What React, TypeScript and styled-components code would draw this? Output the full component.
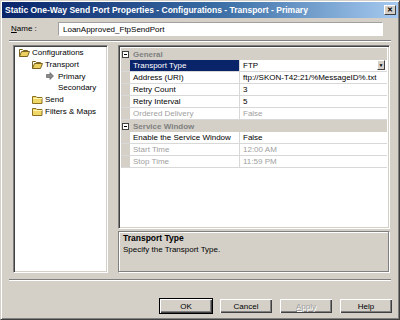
import styled, { createGlobalStyle } from "styled-components";

const GlobalStyle = createGlobalStyle`
  html, body {
    margin: 0;
    padding: 0;
    background: #d4d0c8;
  }
  body {
    font-family: "Liberation Sans", Arial, sans-serif;
    font-size: 8px;
    color: #000;
  }
`;

type Prop = { name: string; value: string; disabled?: boolean; selected?: boolean; dropdown?: boolean };
type Category = { title: string; items: Prop[] };

const categories: Category[] = [
  {
    title: "General",
    items: [
      { name: "Transport Type", value: "FTP", selected: true, dropdown: true },
      { name: "Address (URI)", value: "ftp://SKON-T42:21/%MessageID%.txt" },
      { name: "Retry Count", value: "3" },
      { name: "Retry Interval", value: "5" },
      { name: "Ordered Delivery", value: "False", disabled: true },
    ],
  },
  {
    title: "Service Window",
    items: [
      { name: "Enable the Service Window", value: "False" },
      { name: "Start Time", value: "12:00 AM", disabled: true },
      { name: "Stop Time", value: "11:59 PM", disabled: true },
    ],
  },
];

const OpenFolder = () => (
  <svg width="11" height="9" viewBox="0 0 11 9">
    <path d="M0.5 1.5h3l1 1h4v1.5" fill="#f3e6a0" stroke="#7a6420" />
    <path d="M0.5 1.5v7h8l2-5h-8l-2 5" fill="#ecd060" stroke="#7a6420" />
  </svg>
);

const ClosedFolder = () => (
  <svg width="11" height="9" viewBox="0 0 11 9">
    <path d="M0.5 1.5h3.5l1 1h5v6h-9.5z" fill="#f0d868" stroke="#8a7020" />
    <path d="M1 3.5h9" stroke="#fff3b0" />
  </svg>
);

const PointerIcon = () => (
  <svg width="8" height="8" viewBox="0 0 8 8">
    <path d="M0.5 2.5h3.5v-2l3.5 3.5-3.5 3.5v-2H0.5z" fill="#8a8a8a" stroke="#505050" strokeWidth="0.6" />
  </svg>
);

const treeItems = [
  { label: "Configurations", level: 0, icon: <OpenFolder /> },
  { label: "Transport", level: 1, icon: <OpenFolder /> },
  { label: "Primary", level: 2, icon: <PointerIcon /> },
  { label: "Secondary", level: 2, icon: null },
  { label: "Send", level: 1, icon: <ClosedFolder /> },
  { label: "Filters & Maps", level: 1, icon: <ClosedFolder /> },
];

const App = () => {
  return (
    <>
      <GlobalStyle />
      <Window>
        <TitleBar>
          <TitleText>Static One-Way Send Port Properties - Configurations - Transport - Primary</TitleText>
          <CloseButton>✕</CloseButton>
        </TitleBar>
        <Body>
          <NameRow>
            <NameLabel>
              <u>N</u>ame :
            </NameLabel>
            <NameInput>LoanApproved_FtpSendPort</NameInput>
          </NameRow>
          <Separator $top={4} />
          <Main>
            <Tree>
              {treeItems.map((item) => (
                <TreeItem key={item.label} $level={item.level}>
                  <TreeIcon>{item.icon}</TreeIcon>
                  <span>{item.label}</span>
                </TreeItem>
              ))}
            </Tree>
            <RightColumn>
              <Grid>
                {categories.map((cat) => (
                  <div key={cat.title}>
                    <CategoryRow>
                      <Gutter>
                        <CollapseBox />
                      </Gutter>
                      <CategoryTitle>{cat.title}</CategoryTitle>
                    </CategoryRow>
                    {cat.items.map((p) => (
                      <PropRow key={p.name}>
                        <Gutter />
                        <PropName $selected={p.selected} $disabled={p.disabled}>
                          {p.name}
                        </PropName>
                        <PropValue $disabled={p.disabled}>
                          {p.value}
                          {p.dropdown && <DropButton>▼</DropButton>}
                        </PropValue>
                      </PropRow>
                    ))}
                  </div>
                ))}
              </Grid>
              <Description>
                <DescTitle>Transport Type</DescTitle>
                <DescText>Specify the Transport Type.</DescText>
              </Description>
            </RightColumn>
          </Main>
          <Separator $top={6} />
          <ButtonRow>
            <DialogButton $default>OK</DialogButton>
            <DialogButton>Cancel</DialogButton>
            <DialogButton $disabled>
              <u>A</u>pply
            </DialogButton>
            <DialogButton>Help</DialogButton>
          </ButtonRow>
        </Body>
      </Window>
    </>
  );
};
export default App;

const Window = styled.div`
  width: 400px;
  height: 320px;
  box-sizing: border-box;
  background: #d4d0c8;
  border-left: 1px solid #d4d0c8;
  border-top: 1px solid #d4d0c8;
  border-right: 1px solid #404040;
  border-bottom: 1px solid #404040;
  box-shadow: inset 1px 1px 0 #fff, inset -1px -1px 0 #808080;
  display: flex;
  flex-direction: column;
  overflow: hidden;
`;

const TitleBar = styled.div`
  height: 16px;
  margin: 1px 1px 0 1px;
  background: linear-gradient(to right, #0a246a 0%, #3a6ea5 55%, #a6caf0 100%);
  display: flex;
  align-items: center;
  justify-content: space-between;
  padding: 0 2px 0 3px;
`;

const TitleText = styled.div`
  color: #fff;
  font-weight: bold;
  font-size: 8.5px;
  white-space: nowrap;
`;

const CloseButton = styled.div`
  width: 12px;
  height: 10px;
  box-sizing: border-box;
  background: #d4d0c8;
  border-left: 1px solid #fff;
  border-top: 1px solid #fff;
  border-right: 1px solid #404040;
  border-bottom: 1px solid #404040;
  font-size: 7px;
  font-weight: bold;
  line-height: 8px;
  text-align: center;
  color: #000;
`;

const Body = styled.div`
  flex: 1;
  display: flex;
  flex-direction: column;
  padding: 0 6px 0 8px;
`;

const NameRow = styled.div`
  display: flex;
  align-items: center;
  height: 15px;
  margin-top: 3px;
`;

const NameLabel = styled.div`
  width: 47px;
  padding-left: 2px;
`;

const NameInput = styled.div`
  width: 325px;
  height: 14px;
  box-sizing: border-box;
  background: #fff;
  border-top: 1px solid #a0a0a0;
  border-left: 1px solid #a0a0a0;
  border-right: 1px solid #fff;
  border-bottom: 1px solid #fff;
  padding: 1px 4px;
  line-height: 11px;
`;

const Separator = styled.div<{ $top: number }>`
  height: 0;
  border-top: 1px solid #808080;
  border-bottom: 1px solid #fff;
  margin: ${(p) => p.$top}px 0 3px 0;
  width: 382px;
`;

const Main = styled.div`
  display: flex;
  gap: 10px;
  padding-left: 4px;
  height: 228px;
`;

const sunken = `
  box-sizing: border-box;
  border-top: 1px solid #808080;
  border-left: 1px solid #808080;
  border-right: 1px solid #fff;
  border-bottom: 1px solid #fff;
  box-shadow: inset 1px 1px 0 #404040, inset -1px -1px 0 #d4d0c8;
`;

const Tree = styled.div`
  ${sunken}
  width: 95px;
  height: 228px;
  background: #fff;
  padding: 1px 0 0 4px;
`;

const TreeItem = styled.div<{ $level: number }>`
  display: flex;
  align-items: center;
  height: 11.7px;
  padding-left: ${(p) => p.$level * 13}px;
  white-space: nowrap;
  gap: 2px;
`;

const TreeIcon = styled.span`
  width: 12px;
  display: inline-flex;
  justify-content: center;
`;

const RightColumn = styled.div`
  width: 272px;
  display: flex;
  flex-direction: column;
  gap: 2px;
`;

const Grid = styled.div`
  ${sunken}
  height: 184px;
  background: #fff;
  padding: 2px 2px 0 2px;
`;

const CategoryRow = styled.div`
  display: flex;
  height: 12px;
  background: #d4d0c8;
  align-items: center;
`;

const Gutter = styled.div`
  width: 9px;
  height: 100%;
  flex-shrink: 0;
  background: #d4d0c8;
  display: flex;
  align-items: center;
  justify-content: center;
`;

const CollapseBox = styled.div`
  width: 7px;
  height: 7px;
  box-sizing: border-box;
  border: 1px solid #404040;
  background: #fff;
  position: relative;
  &::after {
    content: "";
    position: absolute;
    left: 1px;
    right: 1px;
    top: 2px;
    height: 1px;
    background: #000;
  }
`;

const CategoryTitle = styled.div`
  font-weight: bold;
  color: #808080;
  padding-left: 3px;
`;

const PropRow = styled.div`
  display: flex;
  height: 12px;
  box-sizing: border-box;
  border-bottom: 1px solid #d8d8d8;
`;

const PropName = styled.div<{ $selected?: boolean; $disabled?: boolean }>`
  width: 106px;
  flex-shrink: 0;
  padding-left: 3px;
  line-height: 11px;
  border-right: 1px solid #d8d8d8;
  background: ${(p) => (p.$selected ? "#0a246a" : "#fff")};
  color: ${(p) => (p.$selected ? "#fff" : p.$disabled ? "#a0a0a0" : "#000")};
  white-space: nowrap;
  overflow: hidden;
`;

const PropValue = styled.div<{ $disabled?: boolean }>`
  flex: 1;
  display: flex;
  justify-content: space-between;
  padding-left: 3px;
  line-height: 11px;
  color: ${(p) => (p.$disabled ? "#a0a0a0" : "#000")};
  white-space: nowrap;
`;

const DropButton = styled.div`
  width: 8px;
  height: 10px;
  box-sizing: border-box;
  margin: 0 2px 0 0;
  background: #d4d0c8;
  border-left: 1px solid #fff;
  border-top: 1px solid #fff;
  border-right: 1px solid #404040;
  border-bottom: 1px solid #404040;
  font-size: 5px;
  line-height: 8px;
  text-align: center;
  color: #000;
`;

const Description = styled.div`
  height: 42px;
  box-sizing: border-box;
  border-top: 1px solid #808080;
  border-left: 1px solid #808080;
  border-right: 1px solid #fff;
  border-bottom: 1px solid #fff;
  box-shadow: inset -1px -1px 0 #808080, inset 1px 1px 0 #fff;
  padding: 1px 4px;
`;

const DescTitle = styled.div`
  font-weight: bold;
  font-size: 8.5px;
  line-height: 11px;
`;

const DescText = styled.div`
  line-height: 11px;
`;

const ButtonRow = styled.div`
  display: flex;
  justify-content: flex-end;
  gap: 6px;
  margin-top: 14px;
`;

const DialogButton = styled.div<{ $default?: boolean; $disabled?: boolean }>`
  width: 54px;
  height: 16px;
  box-sizing: border-box;
  display: flex;
  align-items: center;
  justify-content: center;
  background: #d4d0c8;
  color: ${(p) => (p.$disabled ? "#a0a0a0" : "#000")};
  text-shadow: ${(p) => (p.$disabled ? "1px 1px 0 #fff" : "none")};
  border: 1px solid ${(p) => (p.$default ? "#000" : "transparent")};
  box-shadow: inset 1px 1px 0 #fff, inset -1px -1px 0 #404040, inset -2px -2px 0 #808080;
`;
